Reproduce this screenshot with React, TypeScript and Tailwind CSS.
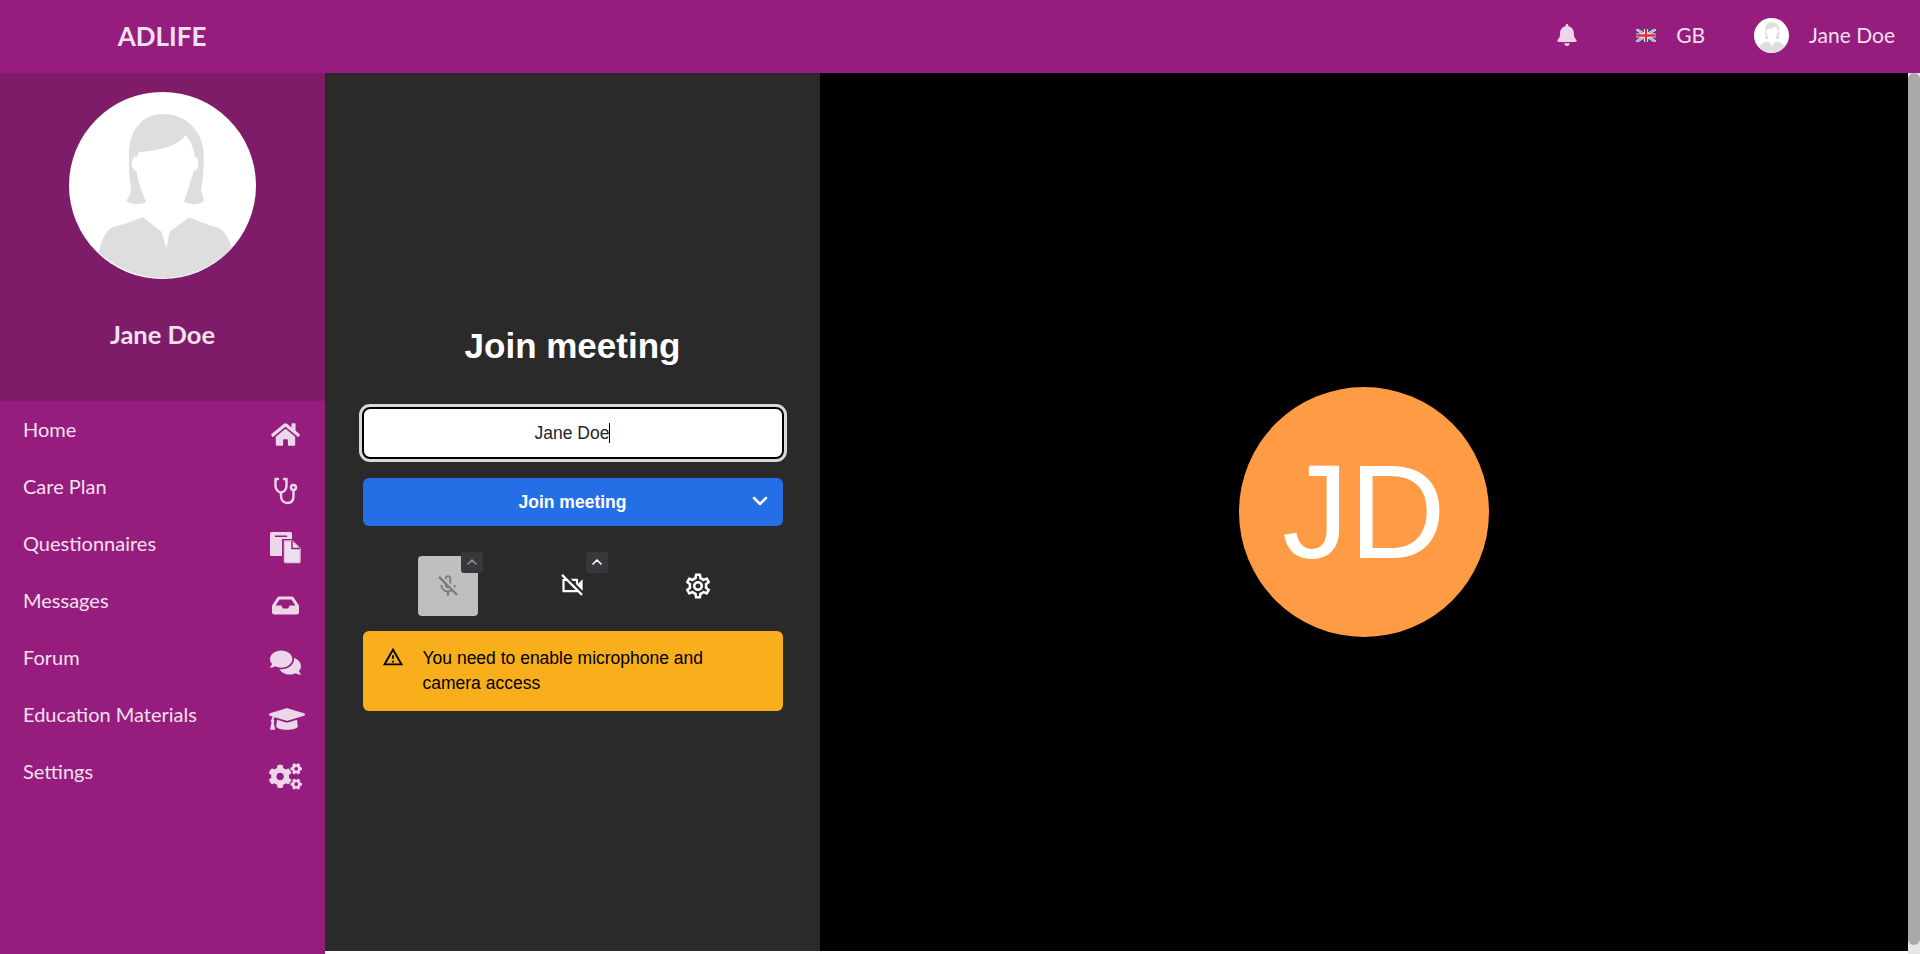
import React from "react";
import { FaBell, FaHome, FaInbox, FaComments, FaGraduationCap, FaCogs } from "react-icons/fa";
import { MdOutlineMicOff, MdOutlineVideocamOff, MdOutlineSettings, MdOutlineWarningAmber } from "react-icons/md";
import { ChevronDown, ChevronUp } from "lucide-react";

function Woman({ className }: { className: string }) {
  return (
    <svg viewBox="0 0 187 187" className={className}>
      <circle cx="93.5" cy="93.5" r="93.5" fill="#fff" />
      <path d="M94 22C72 22 60 40 60 62C59 80 62 92 62 100L57.4 109C62 113 72 113 77 110L115.7 110C121 113 131 113 135 109L132 98C134 88 135 76 134.7 62C134 40 118 22 94 22Z" fill="#dedede" />
      <path d="M70 60C88 59 108 55 116.7 43C122 50 125 56 125.7 64.7C129 64 130 70 129 74C128 78 126 79 124.5 79C122 90 118 100 115 110C116 116 118 122 120 125.3L100.7 139.7L97.4 156.3L92.4 139.7L74 125.3C76 120 77 115 77 110C73 100 69 90 67.5 79C64 78 62 74 63 69C63.5 66 66 64 67.5 65Z" fill="#fff" />
      <path d="M29.7 160C33 146 38 136 46 134.5C52 134 62 129 74 125.3L92.4 139.7L97.4 156.3L100.7 139.7L120 125.3C130 129 138 133 146 134.5C154 136 160 146 163 156A93.5 93.5 0 0 1 29.7 160Z" fill="#dedede" />
    </svg>
  );
}

function Flag() {
  return (
    <svg viewBox="0 0 60 40" className="w-[20px] h-[13px]">
      <rect width="60" height="40" fill="#2b4b94" />
      <path d="M0 0L60 40M60 0L0 40" stroke="#e8e8f0" strokeWidth="8" />
      <path d="M0 0L60 40M60 0L0 40" stroke="#d8506a" strokeWidth="2.5" />
      <path d="M30 0V40M0 20H60" stroke="#f4f4f8" strokeWidth="13" />
      <path d="M30 0V40M0 20H60" stroke="#e2283a" strokeWidth="7" />
    </svg>
  );
}

function Docs() {
  return (
    <svg viewBox="0 0 31 32" className="w-[31px] h-[32px]">
      <path d="M0 1.5A1.5 1.5 0 0 1 1.5 0H20.5A1.5 1.5 0 0 1 22 1.5V24H1.5A1.5 1.5 0 0 1 0 22.5ZM5 3.5V5H17V3.5Z" fill="#ecd6e9" fillRule="evenodd" />
      <path d="M13 8H23L31 16V30A2 2 0 0 1 29 32H15A2 2 0 0 1 13 30Z" fill="#961c7e" stroke="#961c7e" strokeWidth="2" />
      <path d="M14.5 9H22L30 16.5V29.5A1 1 0 0 1 29 30.5H15.5A1 1 0 0 1 14.5 29.5Z" fill="#f0dff0" stroke="#e2bfdb" strokeWidth="1.5" />
      <path d="M22 9V16.5H30" fill="none" stroke="#961c7e" strokeWidth="1.5" />
    </svg>
  );
}

function Steth() {
  return (
    <svg viewBox="0 0 26 28" className="w-[26px] h-[28px]" fill="none" stroke="#ecd6e9" strokeWidth="2.4" strokeLinecap="round" strokeLinejoin="round">
      <path d="M6 2H3.5V9C3.5 13 7 15.5 9 15.5C11 15.5 14.5 13 14.5 9V2H12" />
      <path d="M9 15.5V19C9 23 11.5 26 15.5 26C19.5 26 21.5 23 21.5 19V13" />
      <circle cx="21.5" cy="10.5" r="2.5" />
    </svg>
  );
}

const nav = [
  { label: "Home", icon: <FaHome className="text-[29px]" /> },
  { label: "Care Plan", icon: <Steth /> },
  { label: "Questionnaires", icon: <Docs /> },
  { label: "Messages", icon: <FaInbox className="text-[27px]" /> },
  { label: "Forum", icon: <FaComments className="text-[31px]" /> },
  { label: "Education Materials", icon: <FaGraduationCap className="text-[40px] ml-[4px]" /> },
  { label: "Settings", icon: <FaCogs className="text-[33px]" /> },
];

export default function App() {
  return (
    <div className="h-screen w-full flex flex-col overflow-hidden bg-white font-['Lato','Liberation_Sans',sans-serif]">
      <header className="h-[73px] shrink-0 flex items-center bg-[#961c7e] text-[#f1e0ee]">
        <div className="w-[325px] h-full shrink-0 flex items-center justify-center border-r border-[#8f1c78] text-[26px] font-bold leading-none pb-[1px]">
          ADLIFE
        </div>
        <div className="flex-1 flex items-center justify-end pr-[25px] pb-[3px]">
          <FaBell className="text-[22px] text-[#ecd5e8] mr-[58px]" />
          <Flag />
          <span className="text-[21px] ml-[20px] mr-[49px]">GB</span>
          <Woman className="w-[35px] h-[35px] mr-[20px]" />
          <span className="text-[21px]">Jane Doe</span>
        </div>
      </header>
      <div className="flex-1 flex min-h-0">
        <aside className="w-[325px] shrink-0 bg-[#961c7e] text-[#f1e0ee]">
          <div className="h-[328px] bg-[#7e1c69] flex flex-col items-center pt-[19px]">
            <Woman className="w-[187px] h-[187px]" />
            <div className="mt-[37px] text-[25.5px] font-bold leading-[36px]">Jane Doe</div>
          </div>
          <nav>
            {nav.map((n) => (
              <div key={n.label} className="h-[57px] flex items-center justify-between border-b border-[#8d1b76] pl-[23px] pr-[20px]">
                <span className="text-[20px] leading-[24px]">{n.label}</span>
                <span className="w-[40px] h-[40px] flex items-center justify-center text-[#ecd6e9] mt-[10px]">{n.icon}</span>
              </div>
            ))}
          </nav>
        </aside>
        <div className="flex-1 flex min-w-0">
          <div className="flex-1 flex flex-col min-w-0">
            <div className="h-[878px] flex font-['Liberation_Sans',sans-serif]">
              <section className="w-[495px] shrink-0 bg-[#2a2a2a] flex flex-col items-center justify-center">
                <h1 className="pt-[12px] text-[35px] leading-[40px] font-bold text-white">Join meeting</h1>
                <div className="mt-[41px] w-[422px] h-[52px] rounded-[8px] border-2 border-black bg-white outline-3 outline-[#d8d8d8] outline-offset-0 flex items-center justify-center pt-[1px] text-[17.5px] text-[#1f2430]">
                  <span>Jane Doe</span>
                  <span className="w-px h-[20px] bg-black" />
                </div>
                <button className="mt-[19px] w-[420px] h-[48px] rounded-[6px] bg-[#246fe5] text-white text-[17.5px] font-bold relative flex items-center justify-center pt-[1px]">
                  Join meeting
                  <ChevronDown className="absolute right-[11px] top-[11px] w-[24px] h-[24px]" strokeWidth={2.5} />
                </button>
                <div className="mt-[30px] flex gap-[65px] h-[60px]">
                  <div className="relative w-[60px] h-[60px] rounded-[4px] bg-[#bfbfbf] flex items-center justify-center text-[#7a7a7a]">
                    <MdOutlineMicOff className="text-[26px]" />
                    <div className="absolute -right-[5px] -top-[4px] w-[22px] h-[21px] rounded-[3px] bg-[#36383c] flex items-center justify-center text-[#8e8e8e]">
                      <ChevronUp className="w-[16px] h-[16px]" strokeWidth={2.5} />
                    </div>
                  </div>
                  <div className="relative w-[60px] h-[60px] flex items-center justify-center text-white">
                    <MdOutlineVideocamOff className="text-[27px]" />
                    <div className="absolute right-[-5px] -top-[4px] w-[22px] h-[21px] rounded-[3px] bg-[#36383c] flex items-center justify-center text-white">
                      <ChevronUp className="w-[16px] h-[16px]" strokeWidth={2.5} />
                    </div>
                  </div>
                  <div className="w-[60px] h-[60px] flex items-center justify-center text-white">
                    <MdOutlineSettings className="text-[30px]" />
                  </div>
                </div>
                <div className="mt-[15px] w-[420px] h-[80px] rounded-[6px] bg-[#f9ae1b] flex items-start pl-[20px] pt-[15px] text-black">
                  <MdOutlineWarningAmber className="text-[22px] shrink-0 -ml-[1px]" />
                  <p className="ml-[19px] w-[330px] text-[17.5px] leading-[25px]">You need to enable microphone and camera access</p>
                </div>
              </section>
              <section className="flex-1 bg-black flex items-center justify-center">
                <div className="w-[250px] h-[250px] rounded-full bg-[#ff9a45] flex items-center justify-center text-white text-[134px] leading-none">
                  JD
                </div>
              </section>
            </div>
          </div>
          <div className="w-[12px] shrink-0 bg-[#e6e6e6]">
            <div className="h-[872px] rounded-full bg-[#a9a9a9]" />
          </div>
        </div>
      </div>
    </div>
  );
}
